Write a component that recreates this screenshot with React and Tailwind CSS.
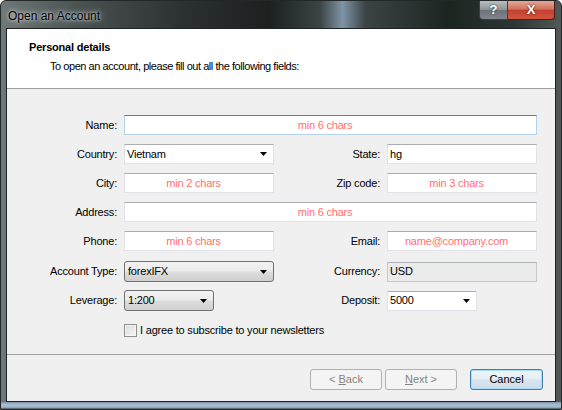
const font = { fontFamily: '"Liberation Sans", Arial, sans-serif' };

const Arrow = () => (
  <svg width="7" height="4" viewBox="0 0 7 4" className="shrink-0">
    <path d="M0 0h7L3.5 4z" fill="#000" />
  </svg>
);

const TextBox = ({ value, hint, width = 'w-[150px]', focused }) => (
  <div
    className={`flex h-[20px] items-center border bg-white ${width} ${
      focused ? 'border-[#b5d2ec] border-t-[#4a83b8]' : 'border-[#e2e3ea] border-t-[#abadb3]'
    }`}
  >
    {hint ? (
      <span className="w-full pr-[11px] text-center text-[#ff7070]">{hint}</span>
    ) : (
      <span className="pl-[2px] text-black">{value}</span>
    )}
  </div>
);

const Combo = ({ value, width }) => (
  <div
    className={`flex h-[20px] items-center justify-between border border-[#e2e3ea] border-t-[#abadb3] bg-white pl-[2px] pr-[6px] ${width}`}
  >
    <span>{value}</span>
    <Arrow />
  </div>
);

const DropButton = ({ value, width }) => (
  <div
    className={`flex h-[21px] items-center justify-between rounded-[3px] border border-[#707070] bg-[linear-gradient(180deg,#f2f2f2_0%,#ebebeb_48%,#dddddd_52%,#cfcfcf_100%)] pl-[3px] pr-[6px] ${width}`}
  >
    <span>{value}</span>
    <Arrow />
  </div>
);

const Label = ({ children, width = 'w-[110px]' }) => (
  <div className={`${width} shrink-0 text-right text-black`}>{children}</div>
);

const Row = ({ children, className = '' }) => (
  <div className={`flex items-center ${className}`}>{children}</div>
);

const WizardButton = ({ children, disabled, primary }) => (
  <button
    type="button"
    className={`h-[21px] rounded-[3px] border text-[11px] ${
      primary
        ? 'w-[73px] border-[#3c7fb1] bg-[linear-gradient(180deg,#eef4f9_0%,#e6eef5_48%,#d8e4ee_52%,#cfdde9_100%)] text-black shadow-[inset_0_0_0_1px_#a9dcf7]'
        : 'w-[72px] border-[#adb2b5] bg-[#f4f4f4] text-[#838383]'
    }`}
    disabled={disabled}
  >
    {children}
  </button>
);

export default function App() {
  return (
    <div
      style={font}
      className="flex h-[410px] w-[562px] flex-col overflow-hidden rounded-t-[6px] border border-[#222827] bg-[linear-gradient(90deg,#6f7877_0%,#4a5251_14%,#2c3231_32%,#1c2120_48%,#3c4445_57%,#7f94a6_61%,#3c4445_65%,#1b2520_80%,#2e3735_92%,#505958_100%)] px-[5px] text-[11px] tracking-[-0.2px]"
    >
      <div className="flex h-[27px] shrink-0 items-start justify-between tracking-normal">
        <div className="pl-[2px] pt-[6px] text-[12px] text-black [text-shadow:0_0_6px_#d8dcdc,0_0_3px_#d8dcdc]">
          Open an Account
        </div>
        <div className="mr-[1px] flex -mt-px">
          <div className="flex h-[20px] w-[29px] items-center justify-center rounded-bl-[4px] border border-[#3a3f42] bg-[linear-gradient(180deg,#b9bec1_0%,#8d9498_48%,#6c7378_52%,#7f878c_100%)] text-[13px] font-bold text-white [text-shadow:0_0_2px_#222]">
            ?
          </div>
          <div className="flex h-[20px] w-[47px] items-center justify-center rounded-br-[4px] border border-l-0 border-[#4a1f1a] bg-[linear-gradient(180deg,#e8a796_0%,#d0705e_45%,#c2402f_52%,#d2553f_100%)] text-[13px] font-bold text-white [text-shadow:0_0_2px_#3a0a05]">
            X
          </div>
        </div>
      </div>

      <div className="flex flex-1 flex-col border border-[#1b2224] bg-[#f0f0f0]">
        <div className="h-[59px] shrink-0 bg-white pl-[22px] pt-[10px]">
          <div className="font-bold text-black">Personal details</div>
          <div className="pl-[21px] pt-[2px] tracking-[-0.45px] text-black">
            To open an account, please fill out all the following fields:
          </div>
        </div>
        <div className="h-px shrink-0 bg-[#a0a0a0]" />

        <div className="flex flex-1 flex-col pt-[26px]">
          <Row>
            <Label>Name:</Label>
            <div className="ml-[7px]">
              <TextBox width="w-[413px]" hint="min 6 chars" focused />
            </div>
          </Row>
          <Row className="mt-[9px]">
            <Label>Country:</Label>
            <div className="ml-[7px]">
              <Combo value="Vietnam" width="w-[150px]" />
            </div>
            <Label width="w-[106px]">State:</Label>
            <div className="ml-[7px]">
              <TextBox value="hg" />
            </div>
          </Row>
          <Row className="mt-[9px]">
            <Label>City:</Label>
            <div className="ml-[7px]">
              <TextBox hint="min 2 chars" />
            </div>
            <Label width="w-[106px]">Zip code:</Label>
            <div className="ml-[7px]">
              <TextBox hint="min 3 chars" />
            </div>
          </Row>
          <Row className="mt-[9px]">
            <Label>Address:</Label>
            <div className="ml-[7px]">
              <TextBox width="w-[413px]" hint="min 6 chars" />
            </div>
          </Row>
          <Row className="mt-[9px]">
            <Label>Phone:</Label>
            <div className="ml-[7px]">
              <TextBox hint="min 6 chars" />
            </div>
            <Label width="w-[106px]">Email:</Label>
            <div className="ml-[7px]">
              <TextBox hint="name@company.com" />
            </div>
          </Row>
          <Row className="mt-[10px]">
            <Label>Account Type:</Label>
            <div className="ml-[7px]">
              <DropButton value="forexIFX" width="w-[150px]" />
            </div>
            <Label width="w-[106px]">Currency:</Label>
            <div className="ml-[7px] flex h-[20px] w-[150px] items-center border border-[#c5c8cc] border-t-[#adb2b5] bg-[#ebebeb] pl-[2px]">
              USD
            </div>
          </Row>
          <Row className="mt-[8px]">
            <Label>Leverage:</Label>
            <div className="ml-[7px]">
              <DropButton value="1:200" width="w-[90px]" />
            </div>
            <Label width="w-[166px]">Deposit:</Label>
            <div className="ml-[7px]">
              <Combo value="5000" width="w-[90px]" />
            </div>
          </Row>
          <Row className="mt-[11px] pl-[117px]">
            <div className="h-[13px] w-[13px] border border-[#8e8f8f] bg-[linear-gradient(135deg,#dcdcdc_0%,#f6f6f6_100%)] shadow-[inset_0_0_0_1px_#f4f4f4]" />
            <span className="ml-[3px] text-black">I agree to subscribe to your newsletters</span>
          </Row>
        </div>

        <div className="h-px shrink-0 bg-[#a0a0a0]" />
        <div className="flex h-[46px] shrink-0 justify-end pr-[12px] pt-[14px] tracking-normal">
          <WizardButton disabled>
            &lt; <u>B</u>ack
          </WizardButton>
          <div className="ml-[3px]">
            <WizardButton disabled>
              <u>N</u>ext &gt;
            </WizardButton>
          </div>
          <div className="ml-[13px]">
            <WizardButton primary>Cancel</WizardButton>
          </div>
        </div>
      </div>

      <div className="-mx-[5px] h-[7px] shrink-0 bg-[linear-gradient(180deg,#7f95aa_0%,#a9bed3_40%,#9fb5cb_75%,#40505c_100%)]" />
    </div>
  );
}
